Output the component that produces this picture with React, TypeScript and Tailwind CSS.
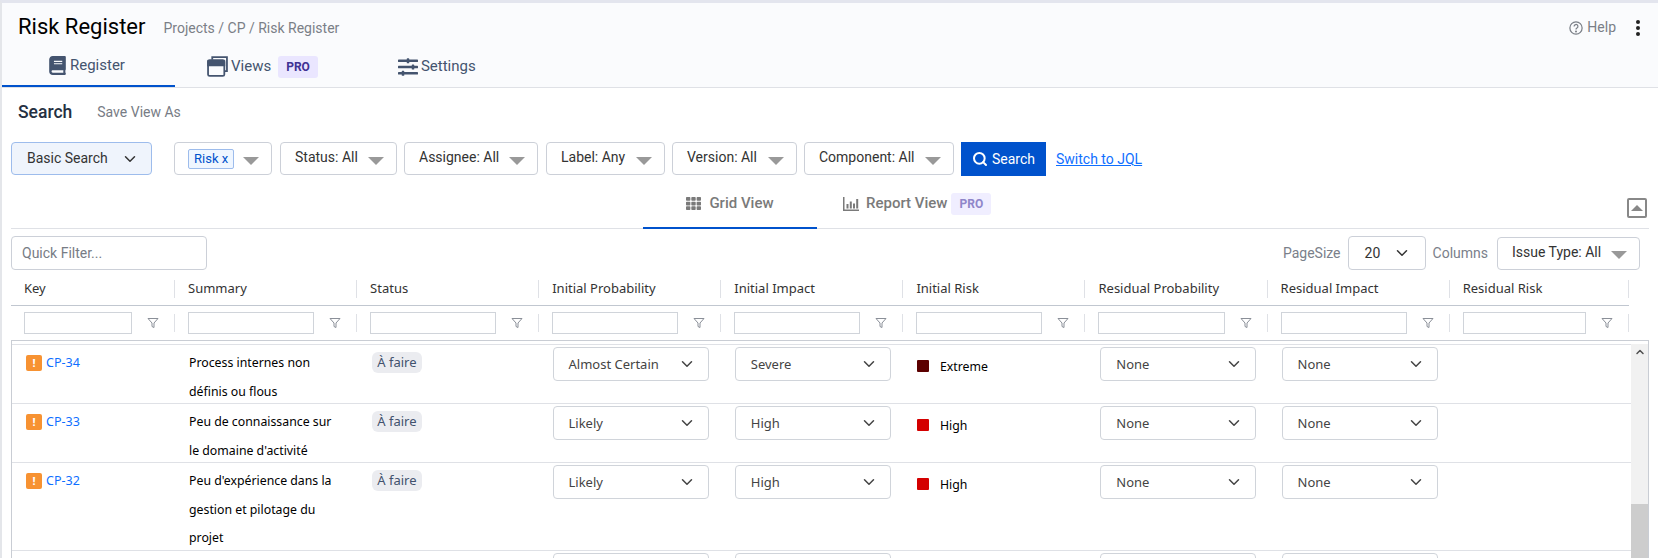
import { ChevronDown, ChevronUp, Search } from 'lucide-react'
import { FaBook, FaSlidersH, FaTh } from 'react-icons/fa'

const columns = [
  'Key',
  'Summary',
  'Status',
  'Initial Probability',
  'Initial Impact',
  'Initial Risk',
  'Residual Probability',
  'Residual Impact',
  'Residual Risk',
]

// the fourth row is cut by the window, only the tops of its controls show
const rows = [
  { key: 'CP-34', summary: ['Process internes non', 'définis ou flous'], prob: 'Almost Certain', impact: 'Severe', risk: 'Extreme', residual: 'None', color: 'bg-[#5c0000]', h: 'h-[59px]' },
  { key: 'CP-33', summary: ['Peu de connaissance sur', "le domaine d'activité"], prob: 'Likely', impact: 'High', risk: 'High', residual: 'None', color: 'bg-[#d40000]', h: 'h-[59px]' },
  { key: 'CP-32', summary: ["Peu d'expérience dans la", 'gestion et pilotage du', 'projet'], prob: 'Likely', impact: 'High', risk: 'High', residual: 'None', color: 'bg-[#d40000]', h: 'h-[88px]' },
  { key: '', summary: [], prob: '', impact: '', risk: '', residual: '', color: '', h: 'h-[59px]' },
]

function Arrow() {
  return <span className="ml-auto mt-1 h-0 w-0 border-x-[8px] border-t-[8px] border-x-transparent border-t-[#999]" />
}

function FilterSelect({ label, className = '' }: { label: string; className?: string }) {
  return (
    <div className={`flex h-[33px] items-center rounded-[4px] border border-[#ccd0d8] bg-white pl-[14px] pr-[12px] text-[14px] ${className}`}>
      <span className="-mt-0.5 text-[#333]">{label}</span>
      <Arrow />
    </div>
  )
}

function RowSelect({ label }: { label: string }) {
  return (
    <div className="flex h-[34px] w-[156px] items-center justify-between rounded-[4px] border border-[#d0d4da] bg-white pl-[15px] pr-[12px] font-['Noto_Sans'] text-[13px] text-[#444]">
      <span className="pt-[2px]">{label}</span>
      <ChevronDown className="h-[18px] w-[18px] text-[#444]" strokeWidth={2} />
    </div>
  )
}

function FunnelIcon() {
  return (
    <svg viewBox="0 0 12 12" className="h-3 w-3 text-[#8a8f98]" fill="none" stroke="currentColor" strokeWidth="1">
      <path d="M1 1.5h10L7 6v4.5L5 9.5V6z" />
    </svg>
  )
}

function ViewsIcon() {
  return (
    <svg viewBox="0 0 20 20" className="h-[21px] w-[21px] text-[#44546f]" fill="none" stroke="currentColor" strokeWidth="1.7">
      <path d="M5 3.5V1h14v13.5h-2.5" />
      <rect x="1" y="4" width="15.5" height="15" rx="1.5" />
      <path d="M1 4.8h15.5v4H1z" fill="currentColor" />
    </svg>
  )
}

function ReportIcon() {
  return (
    <svg viewBox="0 0 16 14" className="h-[14px] w-4 text-[#7a7a7a]" fill="currentColor">
      <path d="M0 0h1.5v12.5H16V14H0z" />
      <path d="M3.5 7h2v4.5h-2zM6.8 4.5h2v7h-2zM10 6.5h2v5h-2zM13.2 2h2v9.5h-2z" />
    </svg>
  )
}

export default function App() {
  return (
    <div className="flex h-[558px] w-[1658px] flex-col overflow-hidden border-l-2 border-t-[3px] border-l-[#e4e6ea] border-t-[#e3e5ee] bg-white font-['Roboto',sans-serif]">
      {/* Header */}
      <div className="h-[85px] shrink-0 border-b border-[#dfe1e6] bg-[#fafbfd]">
        <div className="flex h-[41px] items-center pl-4 pr-[18px] pt-[5px]">
          <span className="text-[22px] text-black">Risk Register</span>
          <span className="ml-[18px] mt-[5px] text-[14px] text-[#7a7f87]">Projects / CP / Risk Register</span>
          <div className="ml-auto mt-[3px] flex items-center text-[14px] text-[#7a7f87]">
            <svg viewBox="0 0 16 16" className="mr-1 h-[14px] w-[14px]" fill="none" stroke="currentColor" strokeWidth="1.4">
              <circle cx="8" cy="8" r="7" />
              <path d="M5.8 6.2a2.2 2.2 0 1 1 3.3 1.9c-.7.4-1.1.8-1.1 1.6" />
              <circle cx="8" cy="12" r=".5" fill="currentColor" />
            </svg>
            Help
            <span className="ml-5 flex flex-col gap-[2px]">
              <span className="h-1 w-1 rounded-full bg-[#222]" />
              <span className="h-1 w-1 rounded-full bg-[#222]" />
              <span className="h-1 w-1 rounded-full bg-[#222]" />
            </span>
          </div>
        </div>
        <div className="flex h-[43px] text-[15px] text-[#44546f]">
          <div className="flex w-[173px] items-center border-b-2 border-[#0052cc] pl-[46px] pt-[2px]">
            <FaBook className="mr-[3px] h-[19px] w-[19px]" />
            Register
          </div>
          <div className="ml-[32px] flex items-center pt-[2px]">
            <ViewsIcon />
            <span className="ml-[3px]">Views</span>
            <span className="ml-[7px] rounded-[3px] bg-[#eae6ff] px-[8px] py-[2px] text-[12px] font-bold text-[#403294]">PRO</span>
          </div>
          <div className="ml-[80px] flex items-center pt-[2px]">
            <FaSlidersH className="mr-[3px] h-[20px] w-[20px]" />
            Settings
          </div>
        </div>
      </div>

      {/* Search title */}
      <div className="flex h-[54px] shrink-0 items-center pb-[6px] pl-4">
        <span className="text-[17.5px] font-medium text-[#253042]">Search</span>
        <span className="ml-[25px] text-[14px] text-[#777c85]">Save View As</span>
      </div>

      {/* Filters */}
      <div className="flex h-[41px] shrink-0 items-start pl-[9px] text-[14px]">
        <div className="flex h-[33px] w-[141px] items-center justify-between rounded-[4px] border border-[#9dbcec] bg-[#eff4fc] pl-[15px] pr-[12px] text-[#333]">
          Basic Search
          <ChevronDown className="h-[18px] w-[18px]" strokeWidth={2} />
        </div>
        <div className="ml-[22px] flex h-[33px] w-[98px] items-center rounded-[4px] border border-[#ccd0d8] pl-[13px] pr-3">
          <span className="rounded-[2px] border border-[#9dbcec] bg-[#eff6ff] px-[5px] text-[13px] leading-[18px] text-[#0052cc]">Risk x</span>
          <Arrow />
        </div>
        <FilterSelect label="Status: All" className="ml-2 w-[117px]" />
        <FilterSelect label="Assignee: All" className="ml-[7px] w-[134px]" />
        <FilterSelect label="Label: Any" className="ml-2 w-[119px]" />
        <FilterSelect label="Version: All" className="ml-[7px] w-[125px]" />
        <FilterSelect label="Component: All" className="ml-[7px] w-[150px]" />
        <button className="ml-[7px] flex h-[34px] w-[85px] items-center justify-center gap-1 bg-[#0052cc] text-white">
          <Search className="h-4 w-4" strokeWidth={3} />
          Search
        </button>
        <a className="ml-[10px] mt-[7px] text-[#0f6fff] underline">Switch to JQL</a>
      </div>

      {/* View tabs */}
      <div className="relative mx-[9px] flex h-[46px] shrink-0 items-stretch border-b border-[#dfe1e6] text-[15px] font-medium text-[#7a7a7a]">
        <div className="-mb-px ml-[632px] flex w-[174px] items-center justify-center gap-2 border-b-2 border-[#0052cc] pb-1">
          <FaTh className="h-[15px] w-[15px]" />
          Grid View
        </div>
        <div className="ml-[26px] flex items-center pb-1">
          <ReportIcon />
          <span className="ml-[7px]">Report View</span>
          <span className="ml-1 rounded-[3px] bg-[#f0eeff] px-2 py-[2px] text-[12px] font-bold text-[#8f86c9]">PRO</span>
        </div>
        <div className="absolute right-[2px] top-[15px] flex h-[20px] w-[20px] items-center justify-center rounded-[2px] border-2 border-[#888]">
          <span className="h-0 w-0 border-x-[6px] border-b-[6px] border-x-transparent border-b-[#888]" />
        </div>
      </div>

      {/* Toolbar */}
      <div className="mt-[7px] flex h-[34px] shrink-0 items-center pl-[9px] pr-[18px] text-[14px]">
        <div className="flex h-[34px] w-[196px] items-center rounded-[4px] border border-[#ccd0d8] pl-[10px] text-[#777c85]">Quick Filter...</div>
        <span className="ml-auto text-[#7a808a]">PageSize</span>
        <div className="ml-[7px] flex h-[34px] w-[78px] items-center justify-between rounded-[4px] border border-[#ccd0d8] pl-4 pr-[14px] text-[#333]">
          20
          <ChevronDown className="h-[18px] w-[18px]" strokeWidth={2} />
        </div>
        <span className="ml-[7px] text-[#7a808a]">Columns</span>
        <FilterSelect label="Issue Type: All" className="ml-[9px] w-[143px]" />
      </div>

      {/* Table head */}
      <div className="ml-[9px] flex h-[36px] w-[1618px] shrink-0 items-center border-b border-[#c1c7d0] pt-[3px] font-['Noto_Sans',sans-serif] text-[13px] text-[#333]">
        <div className="grid w-full grid-cols-[164px_repeat(7,182.1px)_179px]">
          {columns.map((c) => (
            <div key={c} className="flex h-[18px] items-center border-r border-[#dfe1e6] pl-[13px]">{c}</div>
          ))}
        </div>
      </div>
      <div className="ml-[9px] grid h-[34px] w-[1618px] shrink-0 grid-cols-[164px_repeat(7,182.1px)_179px] items-center">
        {columns.map((c) => (
          <div key={c} className="flex h-[18px] items-center justify-between border-r border-[#dfe1e6] pl-[13px] pr-[15px]">
            <span className="-my-1 h-[22px] flex-1 border border-[#d0d4da] bg-white" />
            <span className="ml-[15px]"><FunnelIcon /></span>
          </div>
        ))}
      </div>

      {/* Rows */}
      <div className="ml-[9px] flex min-h-0 w-[1638px] flex-1 border-x border-t border-[#c9cdd4] pt-[3px]">
        <div className="min-w-0 flex-1 overflow-hidden border-t border-[#dfe1e6]">
          {rows.map((r, i) => (
            <div key={i} className={`grid ${r.h} shrink-0 grid-cols-[162px_repeat(8,182.25px)] border-b border-[#dfe1e6] font-['Noto_Sans',sans-serif] text-[12.3px]`}>
              <div className="flex items-start gap-[4px] pl-[14px] pt-[10px] text-[#0f6fff]">
                {r.key && (
                  <span className="flex h-[16px] w-[16px] items-center justify-center rounded-[2px] bg-[#f79232] text-[11px] font-bold text-white">!</span>
                )}
                <span className="text-[12.5px] leading-[16px]">{r.key}</span>
              </div>
              <div className="pl-[15px] pt-[4px] leading-[28.5px] text-black">
                {r.summary.map((line) => (
                  <div key={line}>{line}</div>
                ))}
              </div>
              <div className="pl-[16px] pt-[7px]">
                <span className="inline-block rounded-[6px] bg-[#ebecf0] px-[5px] py-[1px] text-[13px] leading-[19px] text-[#42526e]">À faire</span>
              </div>
              <div className="pl-[14px] pt-[2px]"><RowSelect label={r.prob} /></div>
              <div className="pl-[14px] pt-[2px]"><RowSelect label={r.impact} /></div>
              <div className="flex items-start pl-[14px] pt-[14px] font-normal text-black">
                {r.risk && <span className={`mr-[11px] mt-[1px] h-3 w-3 rounded-[1px] ${r.color}`} />}
                <span className="leading-[16px]">{r.risk}</span>
              </div>
              <div className="pl-[15px] pt-[2px]"><RowSelect label={r.residual} /></div>
              <div className="pl-[14px] pt-[2px]"><RowSelect label={r.residual} /></div>
              <div />
            </div>
          ))}
        </div>
        <div className="flex w-[17px] shrink-0 flex-col items-center bg-[#f1f1f1]">
          <ChevronUp className="mt-0.5 h-3 w-3 text-[#505050]" strokeWidth={3} />
          <div className="mt-auto h-[54px] w-full bg-[#cdcdcd]" />
        </div>
      </div>
    </div>
  )
}
